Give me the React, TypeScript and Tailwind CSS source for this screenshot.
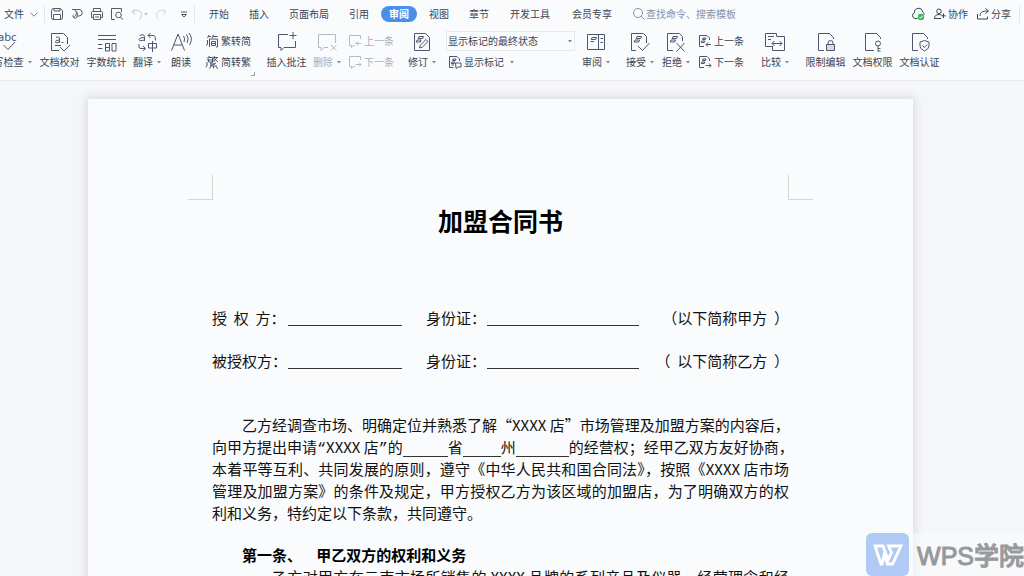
import type { ReactNode } from "react";

const HEADER_TABS = ["开始", "插入", "页面布局", "引用", "审阅", "视图", "章节"];
const EXTRA_TABS = ["开发工具", "会员专享"];

function Icon({ children }: { children: ReactNode }) {
  return (
    <svg
      viewBox="0 0 22 22"
      className="size-[22px] shrink-0 overflow-visible"
      fill="none"
      stroke="currentColor"
      strokeWidth={1}
      aria-hidden="true"
    >
      {children}
    </svg>
  );
}

function SmallIcon({ children }: { children: ReactNode }) {
  return (
    <svg
      viewBox="0 0 14 14"
      className="size-[14px] shrink-0"
      fill="none"
      stroke="currentColor"
      strokeWidth={1}
      aria-hidden="true"
    >
      {children}
    </svg>
  );
}

function Caret() {
  return (
    <svg viewBox="0 0 4 3" className="ml-1 h-[3px] w-1 shrink-0 fill-[#7d8699]" aria-hidden="true">
      <path d="M0 0h4L2 2.5z" />
    </svg>
  );
}

type ToolProps = { label: string; icon: ReactNode; wide?: boolean; caret?: boolean; disabled?: boolean };

function iconTone(disabled?: boolean): string {
  return disabled ? "text-[#b4b9c2]" : "text-[#4c566e]";
}

function Tool({ label, icon, wide, caret, disabled }: ToolProps) {
  return (
    <button
      type="button"
      disabled={disabled}
      className={`flex shrink-0 flex-col items-center gap-[3px] disabled:text-[#a9aeb8] ${wide ? "w-[47px]" : "w-[34px]"}`}
    >
      <span className={iconTone(disabled)}>{icon}</span>
      <span className="flex items-center whitespace-nowrap">
        {label}
        {caret && <Caret />}
      </span>
    </button>
  );
}

function SmallTool({ label, icon, caret, disabled }: Omit<ToolProps, "wide">) {
  return (
    <button
      type="button"
      disabled={disabled}
      className="flex h-[14px] items-center gap-[2px] whitespace-nowrap disabled:text-[#a9aeb8]"
    >
      <span className={iconTone(disabled)}>{icon}</span>
      <span>{label}</span>
      {caret && <Caret />}
    </button>
  );
}

function SmallColumn({ children }: { children: ReactNode }) {
  return <div className="flex flex-col gap-[7px] pt-[3px]">{children}</div>;
}

const marks = <path d="M8 5.500h4.500l-.8 2H7.200zM6 9h4.500l-.8 2H5.200z" />;
const smallMarks = <path d="M5 4h3l-.5 1.500h-3zM3.800 7h3l-.5 1.500h-3z" />;

function CommentArrow({ back }: { back?: boolean }) {
  return (
    <SmallIcon>
      <path d="M7 11.500H5.500L3.500 13.500v-2h-2v-10h11V5" />
      <path d={back ? "M13 9.500H8M10 7.500l-2 2 2 2" : "M7.500 9.500H13M11 7.500l2 2-2 2"} />
    </SmallIcon>
  );
}

function RevisionArrow({ back }: { back?: boolean }) {
  return (
    <SmallIcon>
      <path d="M6 12.500H1.500v-11H9l2.500 2.500V6" />
      {smallMarks}
      <path d={back ? "M13 10.500H8M10 8.500l-2 2 2 2" : "M7.500 10.500H13M11 8.500l2 2-2 2"} />
    </SmallIcon>
  );
}

function Divider() {
  return <span className="h-[18px] w-px bg-[#e3e6ea]" />;
}

function QuickAccess() {
  return (
    <div className="mr-[3px] ml-[5px] flex items-center gap-[6px] text-[#555b66]">
      <button type="button" aria-label="保存">
        <SmallIcon>
          <path d="M1.500 3.500q0-2 2-2h7l2 2v7q0 2-2 2h-7q-2 0-2-2zM4 1.500v2.500h6V1.500M3.500 12.500V7.500h7v5" />
        </SmallIcon>
      </button>
      <button type="button" aria-label="输出为PDF">
        <SmallIcon>
          <path d="M2 2.500h7a3.200 3.200 0 010 6.500H7M4 2.500C7.500 4 7 8 3.500 10.500M7 9a2 2 0 11-3-1.500M6.500 4.500q2 2 .5 4.500" />
        </SmallIcon>
      </button>
      <button type="button" aria-label="打印">
        <SmallIcon>
          <path d="M3.500 4.500v-3h7v3M3.500 10.500h-2v-5q0-1 1-1h9q1 0 1 1v5h-2M3.500 7.500h7v5h-7zM5 10h4" />
        </SmallIcon>
      </button>
      <button type="button" aria-label="打印预览">
        <SmallIcon>
          <path d="M5 12.500H1.500v-11h10V5" />
          <circle cx="8.500" cy="8" r="2.800" />
          <path d="M10.500 10.500l2.500 2" />
        </SmallIcon>
      </button>
      <button type="button" aria-label="撤销" className="flex items-center text-[#c8ccd3]">
        <SmallIcon>
          <path d="M4.500 2L2 5l3.500 2.500M2 5q4-3 7.500-1 4 3 0 8.500" />
        </SmallIcon>
        <svg viewBox="0 0 4 3" className="h-[3px] w-1 fill-[#b8bdc7]" aria-hidden="true">
          <path d="M0 0h4L2 2.5z" />
        </svg>
      </button>
      <button type="button" aria-label="恢复" className="text-[#d3d7dd]">
        <SmallIcon>
          <path d="M9.500 2L12 5 8.500 7.500M12 5Q8 2 4.500 4q-4 3 0 8.500" />
        </SmallIcon>
      </button>
      <button type="button" aria-label="自定义快速访问工具栏" className="ml-[3px]">
        <SmallIcon>
          <path d="M4 5h6M4.500 7.500h5L7 10z" />
        </SmallIcon>
      </button>
    </div>
  );
}

function MenuBar() {
  return (
    <div className="flex h-7 items-center">
      <button type="button" className="mr-[6px] flex items-center gap-[6px] pl-1">
        文件
        <svg viewBox="0 0 8 5" className="h-[5px] w-2 fill-none stroke-[#7d8699]" aria-hidden="true">
          <path d="M.5.5L4 4.200 7.500.5" />
        </svg>
      </button>
      <Divider />
      <QuickAccess />
      <Divider />
      <nav className="ml-1 flex items-center whitespace-nowrap">
        {HEADER_TABS.map((tab) => (
          <button
            key={tab}
            type="button"
            className={
              tab === "审阅"
                ? "mx-[2px] rounded-full bg-[#4a90e8] px-2 leading-4 font-bold text-white"
                : "px-[10px] leading-4"
            }
          >
            {tab}
          </button>
        ))}
        {EXTRA_TABS.map((tab) => (
          <button key={tab} type="button" className="px-[11px] leading-4">
            {tab}
          </button>
        ))}
      </nav>
      <label className="ml-[9px] flex items-center text-[#8490a8]">
        <SmallIcon>
          <circle cx="6" cy="6" r="4.500" />
          <path d="M9.200 9.200L12.500 12.500" />
        </SmallIcon>
        <input
          aria-label="查找命令、搜索模板"
          placeholder="查找命令、搜索模板"
          className="w-[96px] bg-transparent outline-none placeholder:text-[#8490a8]"
        />
      </label>
      <div className="ml-auto flex items-center gap-2 pr-1">
        <button type="button" aria-label="已同步到云端">
          <SmallIcon>
            <path d="M6.500 11.500H4a3 3 0 01-.5-5.800A4 4 0 0111.500 5a3 3 0 011.800 2.500" />
            <circle cx="10" cy="10" r="3.200" fill="#35bd57" stroke="none" />
            <path d="M8.500 10l1.200 1.200 2-2.200" stroke="#fff" />
          </SmallIcon>
        </button>
        <button type="button" className="flex items-center gap-px">
          <SmallIcon>
            <circle cx="6" cy="4.300" r="2.300" />
            <path d="M1.500 11.500q0-4 4.500-4 1.500 0 2.500.8M1.500 11.500H8M10.500 6.500v4.500M8.300 8.800h4.400" />
          </SmallIcon>
          协作
        </button>
        <button type="button" className="flex items-center gap-px">
          <SmallIcon>
            <path d="M1.500 7v5h10V9.500M4 9c0-3.500 2-5 8-5M9.500 1.500L12.500 4l-3 2.500" />
          </SmallIcon>
          分享
        </button>
        <Divider />
      </div>
    </div>
  );
}

function ProofingGroup() {
  return (
    <div className="-ml-4 flex gap-[5px]">
      <Tool
        wide
        caret
        label="拼写检查"
        icon={
          <Icon>
            <text x="1" y="10" fontSize="11" fill="currentColor" stroke="none">
              abc
            </text>
            <path d="M6.500 14l4.500 4.500 7-7.500" />
          </Icon>
        }
      />
      <div className="flex">
        <Tool
          wide
          label="文档校对"
          icon={
            <Icon>
              <path d="M10 19.500H2.500v-17h12l4 4V13M6 14.500h6M11 16l4 4 6-6" />
              <path d="M7 6.500q3.500-1.500 3.500 1.500v4M10.500 9Q6 9 6.500 11t4-.5M12.500 11.500h2" />
            </Icon>
          }
        />
        <Tool
          wide
          label="字数统计"
          icon={
            <Icon>
              <path d="M2 4.500h18M2 8.500h18M2 13.500h4.500M2 17.500h4.500M9.500 12.500h4v7.500h-4zM16 12.500h4v7.500h-4zM9.500 16.500h4" />
            </Icon>
          }
        />
        <Tool
          caret
          label="翻译"
          icon={
            <Icon>
              <path d="M3.500 4.500Q8 2.500 8.500 5.500V10M8.500 6.500Q3 6.500 3 8.500t5.500.5M12 4.500h6q1.500 0 1.500 5M14.500 2L12 4.500 14.500 7M3 13v3q0 1.500 2 1.500h4M7 15l2.500 2.500L7 20M12.500 12.500h8v4.500h-8zM16.500 10v11" />
            </Icon>
          }
        />
        <Tool
          label="朗读"
          icon={
            <Icon>
              <path d="M1.500 19.500L8 3l6.500 16.500M4 14h8M13.500 5q2 2.500.5 6M16.500 3.500q3 4 .5 8.500M19 2q4.500 5.500.5 12" />
            </Icon>
          }
        />
      </div>
    </div>
  );
}

function ReviewGroup() {
  return (
    <div className="ml-[11px] flex gap-[7px]">
      <Tool
        caret
        label="修订"
        icon={
          <Icon>
            <path d="M3.500 2.500h11l4 4v13h-15z" />
            <path d="M8 5.500h4.500l-.8 2H7.200zM6 9h4l-.8 2H5.200zM8.500 17l.8-2.800L15 8.500l2 2-5.700 5.700z" />
          </Icon>
        }
      />
      <div className="flex flex-col gap-1">
        <label className="relative flex h-5 items-center border border-[#e6e9ed] bg-[#fafbfd]">
          <select aria-label="显示以供审阅" className="w-[127px] appearance-none bg-transparent pl-px outline-none">
            <option>显示标记的最终状态</option>
            <option>最终状态</option>
          </select>
          <span className="pointer-events-none absolute right-[2px] flex">
            <Caret />
          </span>
        </label>
        <div className="pl-[2px]">
          <SmallTool
            caret
            label="显示标记"
            icon={
              <SmallIcon>
                <path d="M5.500 12.500h-4v-11H9l2.500 2.500V6M3.500 10H6M7.500 8h5.500v4h-3l-2 1.500z" />
                {smallMarks}
              </SmallIcon>
            }
          />
        </div>
      </div>
    </div>
  );
}

function Ribbon() {
  return (
    <div className="flex items-start pt-[3px]">
      <ProofingGroup />
      <div className="ml-[7px]">
        <SmallColumn>
          <SmallTool
            label="繁转简"
            icon={
              <SmallIcon>
                <path d="M4 1L2.500 4M3 2.500h3M8.500 1L7 4M8 2.500h4.500M4.500 5v8M4.500 5H12.500v8H11M6.500 7.500h4v4h-4zM6.500 9.500h4M2.500 6v4q0 1-1.500 1" />
              </SmallIcon>
            }
          />
          <SmallTool
            label="简转繁"
            icon={
              <SmallIcon>
                <path d="M4.500 1L2 3.500M3.500 2.500h4M3.500 3.500v3.500h4V2.500M2 5h7M9.500 1L8 4M9 2.500h4M12 2.500L8.500 7M9 3.500L13 7M8 7L5 9h5M11 8l-6 3h7M8.500 11v2.500M6 12l-2 1.500M11 12l2 1.500M2 7v4l-1.500 1" />
              </SmallIcon>
            }
          />
        </SmallColumn>
      </div>
      <span className="mt-[41px] size-1 border-r border-b border-[#9aa1ad]" />

      <div className="ml-2 flex">
        <Tool
          wide
          label="插入批注"
          icon={
            <Icon>
              <path d="M12 3.500H2.500v13H5v3l3-3h11.500V10M17 1v7M13.500 4.500h7" />
            </Icon>
          }
        />
        <Tool
          caret
          disabled
          label="删除"
          icon={
            <Icon>
              <path d="M12 16.500H8l-3 3v-3H2.500v-13h17V12M15 14l5.500 5.500M20.500 14L15 19.500" />
            </Icon>
          }
        />
        <div className="ml-1">
          <SmallColumn>
            <SmallTool disabled label="上一条" icon={<CommentArrow back />} />
            <SmallTool disabled label="下一条" icon={<CommentArrow />} />
          </SmallColumn>
        </div>
      </div>

      <ReviewGroup />

      <div className="ml-1 flex gap-[10px]">
        <Tool
          caret
          label="审阅"
          icon={
            <Icon>
              <path d="M2.500 3.500h17v15h-17zM13.500 3.500v15M15.500 7.500h2.500M15.500 11.500h2.500M7 6.500h4.500l-.8 2H6.200zM5.500 10.500H9" />
            </Icon>
          }
        />
        <div className="flex gap-[2px]">
          <Tool
            caret
            label="接受"
            icon={
              <Icon>
                <path d="M7 19.500H2.500v-17h12l3 3V12M9 15l4.500 4.500L20.500 12" />
                {marks}
              </Icon>
            }
          />
          <Tool
            caret
            label="拒绝"
            icon={
              <Icon>
                <path d="M8 19.500H2.500v-17h12l3 3V10M11.500 12l8 8.500M19.500 12l-8 8.500" />
                {marks}
              </Icon>
            }
          />
        </div>
      </div>
      <div className="ml-[5px]">
        <SmallColumn>
          <SmallTool label="上一条" icon={<RevisionArrow back />} />
          <SmallTool label="下一条" icon={<RevisionArrow />} />
        </SmallColumn>
      </div>

      <div className="ml-[14px] flex gap-[10px]">
        <Tool
          caret
          label="比较"
          icon={
            <Icon>
              <path d="M8 15.500H1.500v-13h11V5M4 5.500h6M4 8.500h3M12.500 5.500h8v14h-12V15M8 12.500h10M10.500 10L8 12.500l2.500 2.500M15.500 10l2.500 2.500-2.500 2.500" />
            </Icon>
          }
        />
        <div className="flex">
          <Tool
            wide
            label="限制编辑"
            icon={
              <Icon>
                <path d="M9 19.500H3.500v-17h11l4 4V8" />
                <path d="M11.500 13.500h8v6h-8z" fill="#d5dae2" />
                <path d="M13 13.500V12q0-2.500 2.500-2.500T18 12v1.500" />
              </Icon>
            }
          />
          <Tool
            wide
            label="文档权限"
            icon={
              <Icon>
                <path d="M12 19.500H3.500v-17h11l4 4V8" />
                <circle cx="16" cy="12.500" r="2.500" />
                <path d="M16 15v5.500M16 17.500h2.500M16 20h2.500" />
              </Icon>
            }
          />
          <Tool
            wide
            label="文档认证"
            icon={
              <Icon>
                <path d="M9 19.500H3.500v-17h11l4 4V8" />
                <path d="M15.500 9.500l4.500 1.500v4q0 3-4.500 5-4.500-2-4.500-5v-4zM13.500 14.500l1.800 2 3-3" />
              </Icon>
            }
          />
        </div>
      </div>
    </div>
  );
}

function Blank({ width }: { width: string }) {
  return <span className={`inline-block h-4 border-b border-[#333] align-text-bottom ${width}`} />;
}

function PartyRow({ name, alias }: { name: string; alias: string }) {
  return (
    <div className="flex h-[22px] items-center whitespace-pre">
      <span className="w-[76px]">{name}</span>
      <Blank width="w-[114px]" />
      <span className="ml-6 w-[61px]">身份证：</span>
      <Blank width="w-[152px]" />
      <span className="ml-auto">{alias}</span>
    </div>
  );
}

function HalfWidth({ children }: { children: ReactNode }) {
  return <span className="font-['Liberation_Mono',monospace] leading-none">{children}</span>;
}

function Contract() {
  return (
    <article className="px-[124px] pb-4 text-[15px] leading-[22px] text-[#111]">
      <h1 className="pt-px text-center text-[25px] leading-[38px] font-bold text-black">加盟合同书</h1>
      <div className="mt-[68px] flex flex-col gap-[21px]">
        <PartyRow name="授  权  方：" alias="（以下简称甲方  ）" />
        <PartyRow name="被授权方：" alias="（  以下简称乙方  ）" />
      </div>
      <div className="mt-[42px] whitespace-nowrap">
        <p className="pl-[30px] [text-align-last:justify]">
          乙方经调查市场、明确定位并熟悉了解“XXXX 店”市场管理及加盟方案的内容后，
        </p>
        <p className="[text-align-last:justify]">
          向甲方提出申请<HalfWidth>“</HalfWidth>XXXX 店<HalfWidth>”</HalfWidth>的<Blank width="w-[45px]" />省
          <Blank width="w-[38px]" />州<Blank width="w-[53px]" />
          的经营权；经甲乙双方友好协商，
        </p>
        <p className="[text-align-last:justify]">本着平等互利、共同发展的原则，遵守《中华人民共和国合同法》，按照《XXXX 店市场</p>
        <p className="[text-align-last:justify]">管理及加盟方案》的条件及规定，甲方授权乙方为该区域的加盟店，为了明确双方的权</p>
        <p>利和义务，特约定以下条款，共同遵守。</p>
      </div>
      <h2 className="mt-5 pl-[30px] font-bold whitespace-pre text-black">第一条、　  甲乙双方的权利和义务</h2>
      <p className="pl-[60px] whitespace-nowrap [text-align-last:justify]">
        乙方对甲方在云南市场所销售的 XXXX 品牌的系列产品及仪器、经营理念和经
      </p>
    </article>
  );
}

function Watermark() {
  return (
    <div className="absolute right-0 bottom-0 flex h-[43px] items-center gap-2 bg-[#f9fbfd]/60 text-[#98999b]">
      <svg viewBox="0 0 43 43" className="size-[43px]" aria-hidden="true">
        <rect width="43" height="43" rx="6" fill="#b1caf5" />
        <path
          d="M9 13h8l5 14 3.500-7.500L22.500 13H35l-8.500 18h-5l-3.500-9-2 9h-1z"
          fill="none"
          stroke="#fff"
          strokeWidth="2.800"
        />
      </svg>
      <span className="pt-1 font-['Liberation_Sans','Noto_Sans_CJK_SC',sans-serif] text-[25px] leading-none font-medium whitespace-nowrap [-webkit-text-stroke:1px_#98999b]">
        WPS学院
      </span>
    </div>
  );
}

export default function App() {
  return (
    <div className="relative flex h-screen flex-col overflow-hidden bg-[#f5f6f8] font-['Noto_Sans_CJK_SC',sans-serif]">
      <header className="h-[81px] shrink-0 border-b border-[#e8eaec] bg-[#f9fbfd] text-[10px] leading-3 text-[#3d4352]">
        <MenuBar />
        <Ribbon />
      </header>
      <main className="min-h-0 flex-1 pt-[18px] pr-[111px] pl-[88px]">
        <div className="bg-[#f9fbfd] pt-[76px] shadow-[0_0_8px_2px_#d9dcdf]">
          <div className="flex justify-between px-[100px]">
            <span className="size-[25px] border-r border-b border-[#d3d6d5]" />
            <span className="size-[25px] border-b border-l border-[#d3d6d5]" />
          </div>
          <Contract />
        </div>
      </main>
      <Watermark />
    </div>
  );
}
